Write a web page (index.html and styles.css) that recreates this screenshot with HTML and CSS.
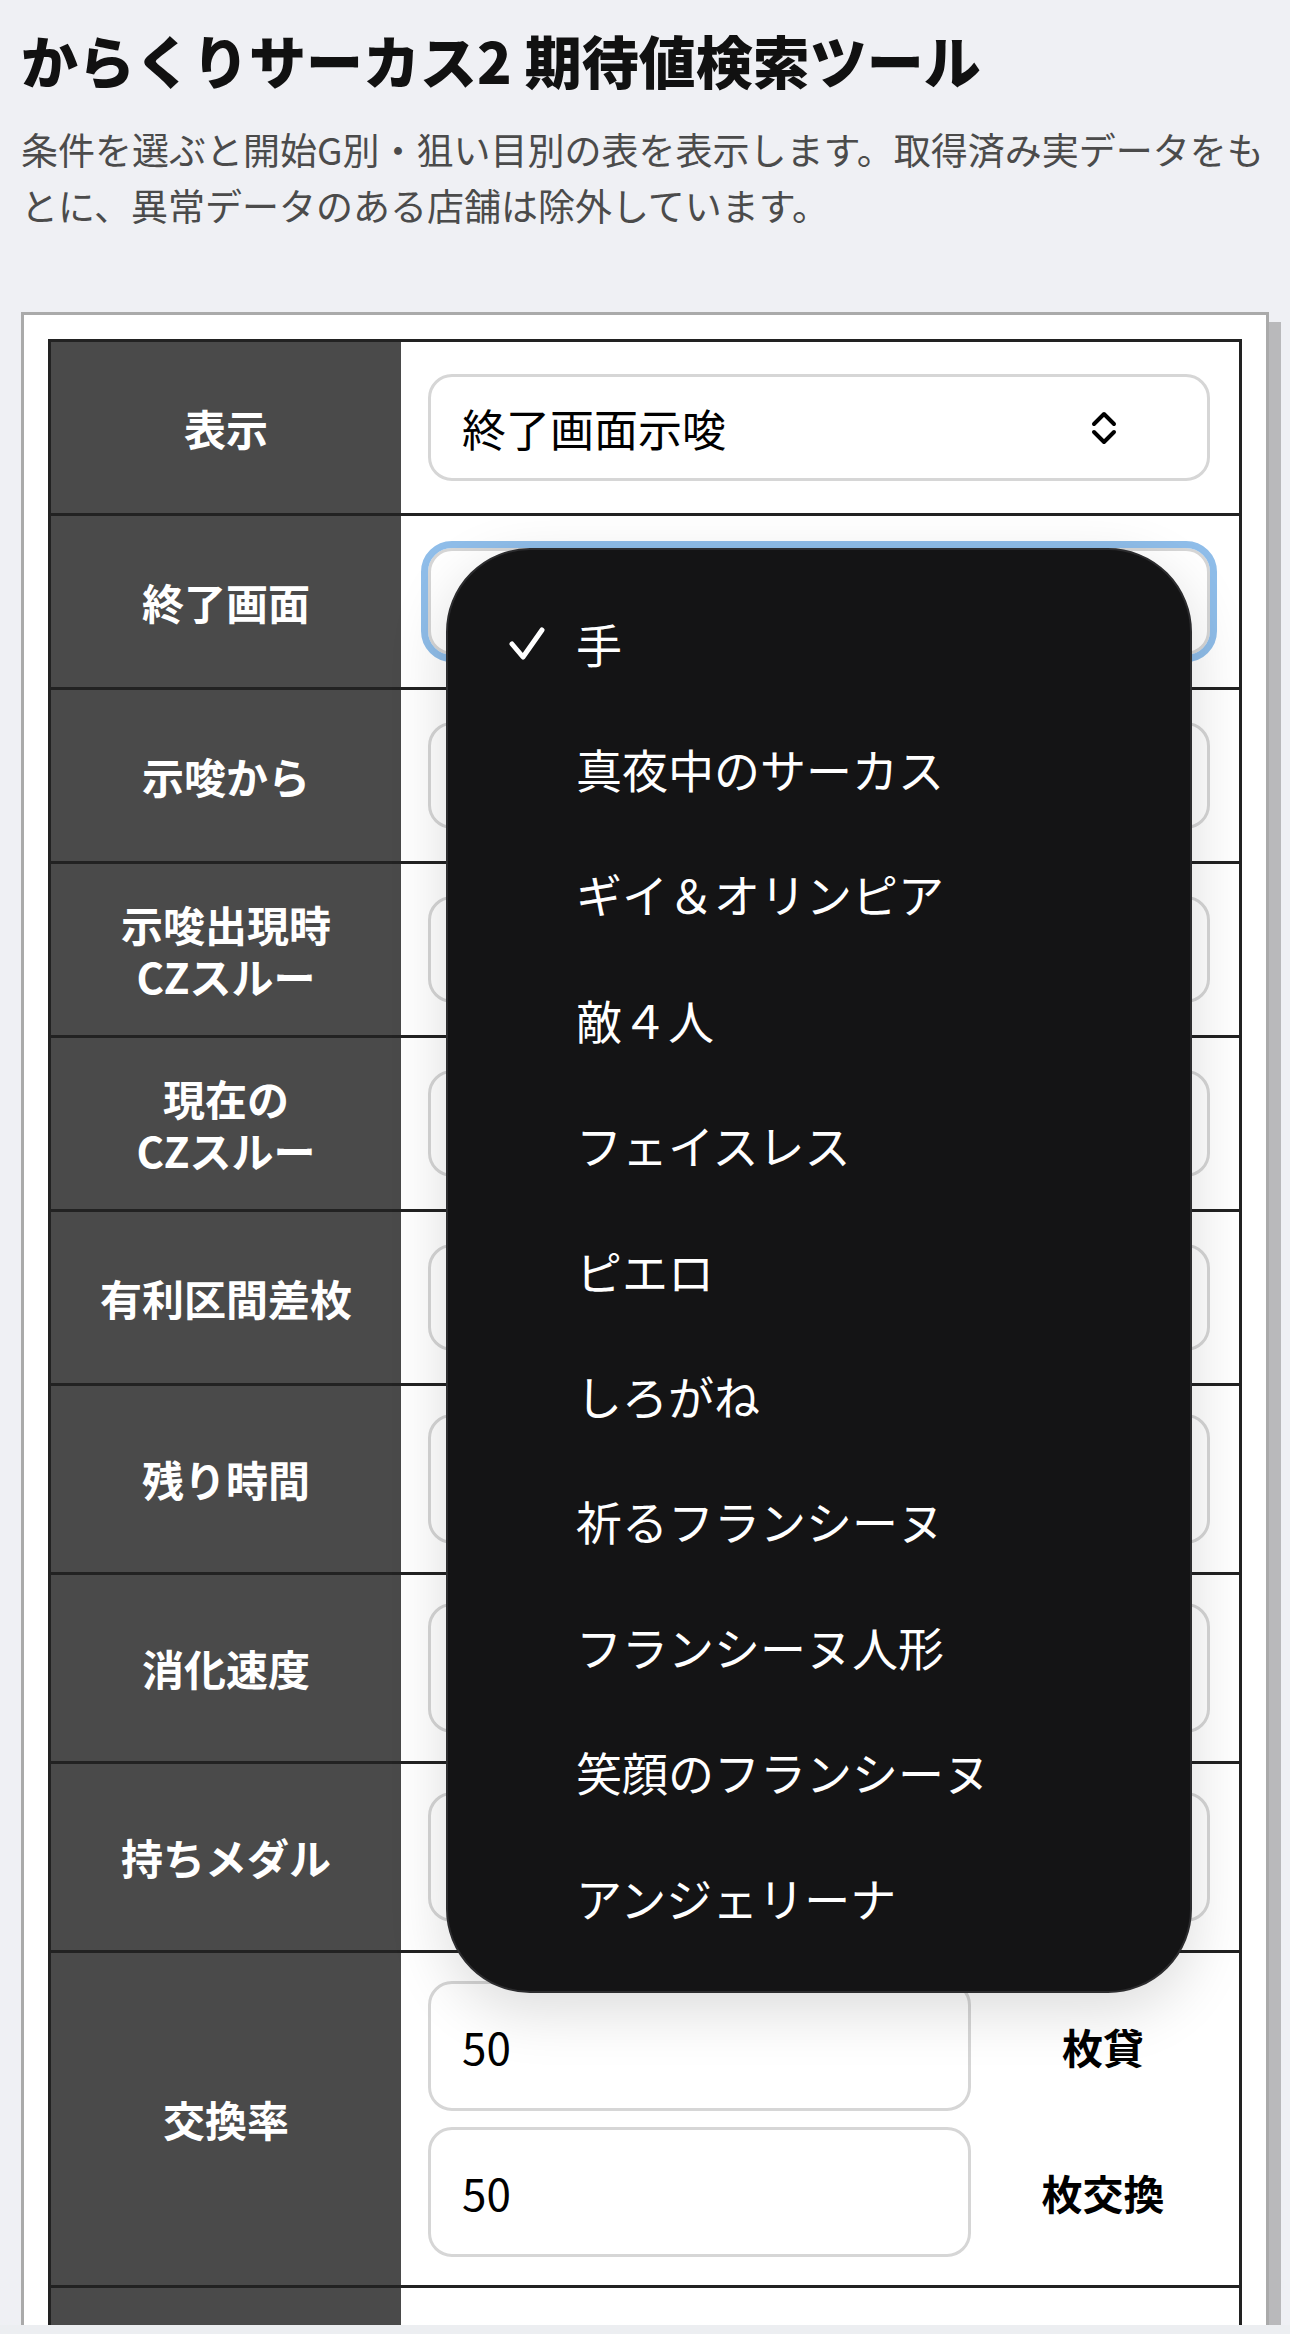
FILE: index.html
```html
<!DOCTYPE html>
<html lang="ja">
<head>
    <meta charset="UTF-8">
    <meta name="viewport" content="width=device-width, initial-scale=1.0">
    <title>からくりサーカス2 期待値検索ツール</title>
    <link rel="stylesheet" href="styles.css">
</head>
<body>
    <h1>からくりサーカス2 期待値検索ツール</h1>
    <p class="lead">条件を選ぶと開始G別・狙い目別の表を表示します。取得済み実データをもとに、異常データのある店舗は除外しています。</p>

    <div class="card">
        <table class="form-table">
            <tr>
                <th>表示</th>
                <td>
                    <div class="select">
                        <span>終了画面示唆</span>
                        <svg class="chevron" width="26" height="34" viewBox="0 0 26 34"><path d="M3 13 L13 3 L23 13 M3 21 L13 31 L23 21"/></svg>
                    </div>
                </td>
            </tr>
            <tr>
                <th>終了画面</th>
                <td><div class="select focused"></div></td>
            </tr>
            <tr>
                <th>示唆から</th>
                <td><div class="select"></div></td>
            </tr>
            <tr>
                <th>示唆出現時<br>CZスルー</th>
                <td><div class="select"></div></td>
            </tr>
            <tr>
                <th>現在の<br>CZスルー</th>
                <td><div class="select"></div></td>
            </tr>
            <tr>
                <th>有利区間差枚</th>
                <td><div class="select"></div></td>
            </tr>
            <tr class="tall">
                <th>残り時間</th>
                <td><div class="num"></div></td>
            </tr>
            <tr class="tall">
                <th>消化速度</th>
                <td><div class="num"></div></td>
            </tr>
            <tr class="tall">
                <th>持ちメダル</th>
                <td><div class="num"></div></td>
            </tr>
            <tr class="tall">
                <th>交換率</th>
                <td class="rate">
                    <div class="rate-grid">
                        <div class="num">50</div>
                        <span class="unit">枚貸</span>
                        <div class="num">50</div>
                        <span class="unit">枚交換</span>
                    </div>
                </td>
            </tr>
            <tr class="last">
                <th></th>
                <td><div class="select"></div></td>
            </tr>
        </table>
    </div>

    <!-- ネイティブのピッカー（開いた状態） -->
    <ul class="picker">
        <li class="checked">
            <svg class="check" width="36" height="34" viewBox="0 0 36 34"><path d="M3 18 L14 31 L33 4"/></svg>
            <span>手</span>
        </li>
        <li><span>真夜中のサーカス</span></li>
        <li><span>ギイ＆オリンピア</span></li>
        <li><span>敵４人</span></li>
        <li><span>フェイスレス</span></li>
        <li><span>ピエロ</span></li>
        <li><span>しろがね</span></li>
        <li><span>祈るフランシーヌ</span></li>
        <li><span>フランシーヌ人形</span></li>
        <li><span>笑顔のフランシーヌ</span></li>
        <li><span>アンジェリーナ</span></li>
    </ul>

    <div class="bottom-bar"></div>
</body>
</html>
```

FILE: styles.css
```css
body {
    margin: 0;
    padding: 23px 21px 0;
    background-color: #eff0f4;
    font-family: "Noto Sans CJK JP", "Noto Sans", sans-serif;
    color: #111;
}
h1 {
    margin: 0;
    font-size: 57px;
    line-height: 72px;
    font-weight: 900;
}
.lead {
    margin: 26px 0 79px;
    font-size: 37px;
    line-height: 56px;
    color: #4b4b4b;
}
.card {
    background-color: #fff;
    border: 3px solid #aaa;
    padding: 24px;
    box-shadow: 12px 10px 0 #b9b9bb;
}
.form-table {
    width: 100%;
    border-collapse: separate;
    border-spacing: 0;
    border: 3px solid #222;
}
.form-table th {
    width: 350px;
    padding: 0;
    background-color: #4a4a4a;
    color: #fff;
    font-size: 42px;
    line-height: 52px;
    font-weight: 700;
    text-align: center;
}
.form-table td {
    padding: 32px 29px 32px 27px;
    background-color: #fff;
}
.form-table tr + tr th,
.form-table tr + tr td {
    border-top: 3px solid #222;
}
.form-table tr.tall td {
    padding-top: 28px;
    padding-bottom: 28px;
}
.form-table tr.last td {
    padding-top: 44px;
}
.form-table td.rate {
    padding-right: 4px;
}
.select,
.num {
    display: flex;
    align-items: center;
    box-sizing: border-box;
    border: 3px solid #d6d6d6;
    border-radius: 24px;
    background-color: #fff;
    font-size: 44px;
    color: #000;
}
.select {
    height: 107px;
    justify-content: space-between;
    padding: 0 90px 0 31px;
}
.select.focused {
    outline: 7px solid #8fbde9;
}
.chevron {
    fill: none;
    stroke: #000;
    stroke-width: 4;
    stroke-linecap: round;
    stroke-linejoin: round;
}
.num {
    height: 130px;
    padding: 0 31px;
}
.rate-grid {
    display: grid;
    grid-template-columns: 543px 1fr;
    row-gap: 16px;
    align-items: center;
}
.unit {
    text-align: center;
    font-size: 41px;
    font-weight: 700;
    color: #000;
}
.picker {
    position: absolute;
    top: 548px;
    left: 446px;
    width: 746px;
    box-sizing: border-box;
    margin: 0;
    padding: 30px 0 32px;
    list-style: none;
    background-color: #141415;
    border: 2px solid #2c2c2e;
    border-radius: 84px;
    box-shadow: 0 18px 60px rgba(0, 0, 0, 0.14);
}
.picker li {
    display: grid;
    grid-template-columns: 67px 1fr;
    align-items: center;
    height: 125.4px;
    padding-left: 61px;
    color: #fff;
    font-size: 46px;
}
.picker li span {
    grid-column: 2;
}
.check {
    grid-column: 1;
    fill: none;
    stroke: #fff;
    stroke-width: 5;
    stroke-linecap: round;
    stroke-linejoin: round;
}
.bottom-bar {
    position: fixed;
    left: 0;
    right: 0;
    bottom: 0;
    height: 9px;
    background-color: #eceef1;
}
```
